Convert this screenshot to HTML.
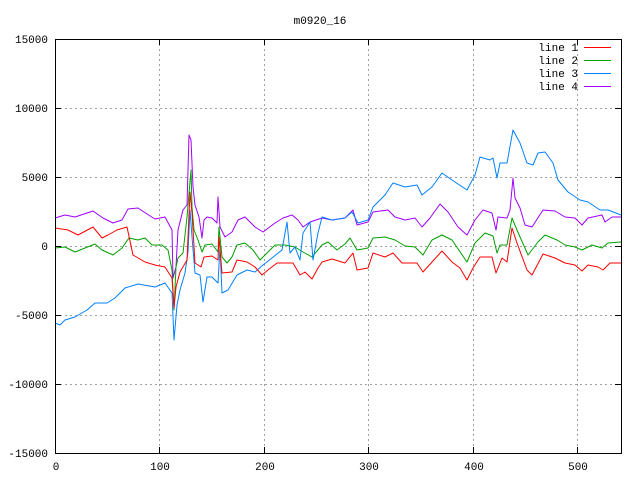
<!DOCTYPE html>
<html><head><meta charset="utf-8"><style>
html,body{margin:0;padding:0;background:#fff;}
svg{display:block;}
text{font-family:"Liberation Mono","DejaVu Sans Mono",monospace;font-size:11px;fill:#000;}
</style></head><body>
<svg width="640" height="480" viewBox="0 0 640 480" xmlns="http://www.w3.org/2000/svg">
<rect width="640" height="480" fill="#fff"/>
<g stroke="#a0a0a0" stroke-width="1" stroke-dasharray="2,3" fill="none" shape-rendering="crispEdges">
<line x1="159.5" y1="39" x2="159.5" y2="453"/>
<line x1="264.5" y1="39" x2="264.5" y2="453"/>
<line x1="368.5" y1="39" x2="368.5" y2="453"/>
<line x1="473.5" y1="39" x2="473.5" y2="453"/>
<line x1="577.5" y1="39" x2="577.5" y2="453"/>
<line x1="55" y1="108.5" x2="621" y2="108.5"/>
<line x1="55" y1="177.5" x2="621" y2="177.5"/>
<line x1="55" y1="246.5" x2="621" y2="246.5"/>
<line x1="55" y1="315.5" x2="621" y2="315.5"/>
<line x1="55" y1="384.5" x2="621" y2="384.5"/>
</g>
<g fill="none" stroke-width="1" stroke-linejoin="round">
<polyline stroke="#a000ff" points="55,218 65,215 75,217 93,211 103,218 113,223 122,220 128,209 138,208 147,214 155,219 165,217 172,230 173,278 176,267 178,230 183,210 187,205 189,135 191,140 193,187 195,205 199,217 202,238 204,220 207,217 212,218 217,223 218,197 220,227 225,237 232,232 238,220 245,217 255,227 263,232 275,223 283,218 292,215 298,220 303,227 310,222 322,218 332,220 345,218 353,210 357,225 368,222 373,212 388,210 395,217 405,220 415,218 422,227 430,218 440,204 448,212 458,227 467,235 475,220 483,210 492,213 496,230 498,217 507,218 510,210 513,178 515,198 520,208 525,225 532,227 543,210 555,211 565,217 575,218 582,225 588,218 602,215 605,222 612,217 621,217"/>
<polyline stroke="#00a000" points="55,248 65,247 75,252 85,248 95,244 102,250 113,255 122,248 129,238 138,240 145,238 152,245 162,245 168,250 172,270 174,310 176,267 178,258 183,253 187,217 191,170 192,207 194,230 198,240 202,252 205,245 212,244 218,252 219,227 222,257 227,263 232,257 237,245 245,243 253,250 260,260 267,253 275,245 285,245 295,247 303,252 312,257 322,245 328,242 337,250 345,244 350,238 357,250 368,248 373,238 385,237 395,240 405,246 415,247 423,255 432,240 442,235 452,240 467,262 475,243 485,233 493,236 497,253 500,245 507,245 512,218 517,230 528,255 538,242 545,235 557,240 565,245 575,247 582,250 592,245 602,248 608,243 621,242"/>
<polyline stroke="#0080ff" points="55,323 60,325 65,320 75,317 87,310 95,303 107,303 115,298 125,288 138,284 155,287 165,283 172,293 174,340 177,305 180,290 185,273 188,252 190,210 192,237 195,273 200,275 203,302 207,277 212,277 218,283 220,247 222,293 228,290 237,275 247,270 255,272 263,265 272,258 282,250 287,222 290,253 295,247 300,260 303,233 310,222 313,260 318,233 322,217 332,220 345,218 352,212 358,223 368,220 373,207 385,195 393,183 405,187 417,185 422,195 432,187 442,173 452,180 467,190 475,175 480,157 490,160 493,158 497,178 500,163 507,163 513,130 520,143 527,163 533,165 538,153 545,152 553,163 558,180 568,192 580,200 588,202 600,210 608,210 621,215"/>
<polyline stroke="#ff0000" points="55,228 68,230 78,235 93,227 102,238 108,235 117,230 127,227 133,255 145,262 155,265 165,267 172,278 174,308 176,287 180,272 187,260 190,192 192,213 195,263 201,267 204,257 212,256 218,260 219,237 222,273 232,272 237,260 247,262 255,267 262,275 268,270 277,263 285,263 293,263 300,275 305,272 312,279 318,268 322,262 332,259 345,263 353,253 357,270 368,268 373,253 385,257 393,253 402,263 417,263 423,272 432,262 442,251 452,262 460,268 467,280 473,268 480,257 492,257 496,273 502,258 507,262 512,228 517,243 527,270 532,275 543,254 555,258 565,263 575,265 582,271 588,265 598,267 603,270 610,263 621,263"/>
</g>
<g stroke="#000" stroke-width="1" fill="none" shape-rendering="crispEdges">
<rect x="55.5" y="39.5" width="566" height="414"/>
<path d="M55 108.5h6M55 177.5h6M55 246.5h6M55 315.5h6M55 384.5h6M621 108.5h-6M621 177.5h-6M621 246.5h-6M621 315.5h-6M621 384.5h-6M159.5 453v-6M264.5 453v-6M368.5 453v-6M473.5 453v-6M577.5 453v-6M159.5 39v6M264.5 39v6M368.5 39v6M473.5 39v6M577.5 39v6"/>
</g>
<text x="320" y="24" text-anchor="middle">m0920_16</text>
<g text-anchor="end">
<text x="48" y="43">15000</text>
<text x="48" y="112">10000</text>
<text x="48" y="181">5000</text>
<text x="48" y="250">0</text>
<text x="48" y="319">-5000</text>
<text x="48" y="388">-10000</text>
<text x="48" y="457">-15000</text>
</g>
<g text-anchor="middle">
<text x="56" y="470">0</text>
<text x="160" y="470">100</text>
<text x="265" y="470">200</text>
<text x="369" y="470">300</text>
<text x="474" y="470">400</text>
<text x="578" y="470">500</text>
</g>
<g text-anchor="end">
<text x="578" y="51">line 1</text>
<text x="578" y="64">line 2</text>
<text x="578" y="77">line 3</text>
<text x="578" y="90">line 4</text>
</g>
<rect x="584" y="47" width="27" height="1" fill="#ff0000"/>
<rect x="584" y="60" width="27" height="1" fill="#00a000"/>
<rect x="584" y="73" width="27" height="1" fill="#0080ff"/>
<rect x="584" y="86" width="27" height="1" fill="#a000ff"/>
</svg>
</body></html>
